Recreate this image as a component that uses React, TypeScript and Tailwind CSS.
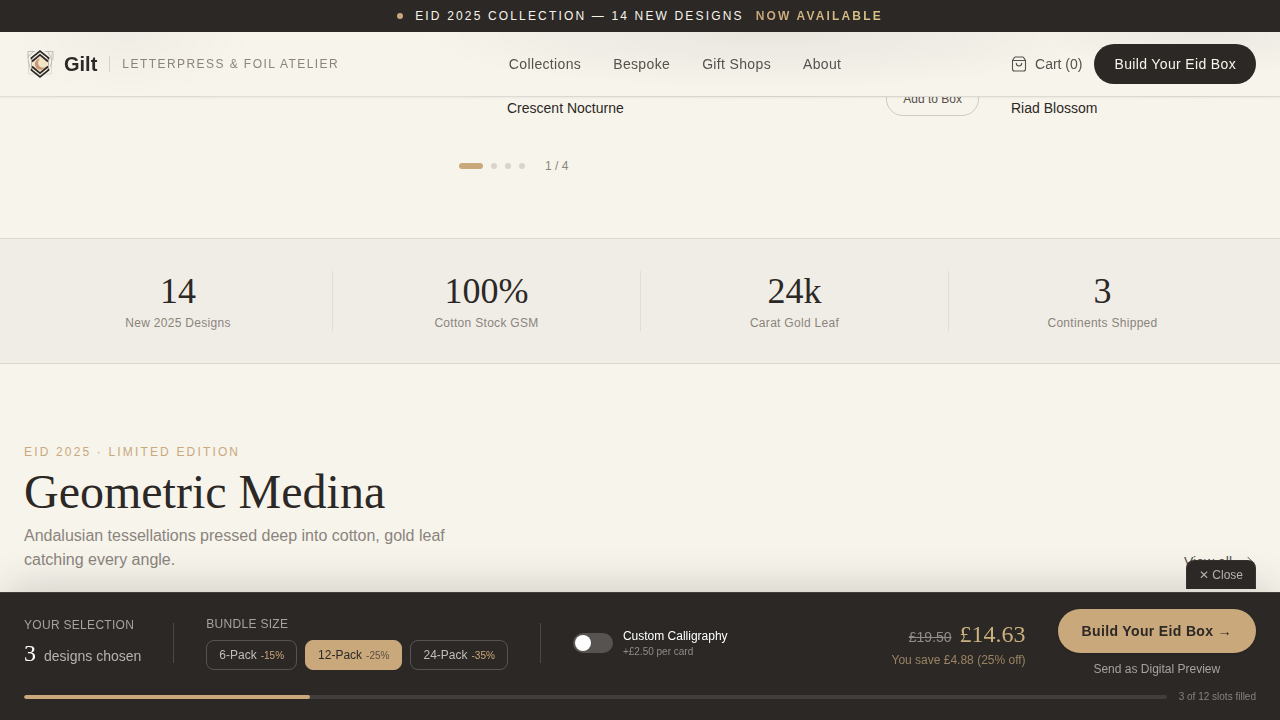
import { useState } from 'react';
import { ArrowRight } from 'lucide-react';

const navLinks = ['Collections', 'Bespoke', 'Gift Shops', 'About'];

const stats = [
  { value: '14', label: 'New 2025 Designs' },
  { value: '100%', label: 'Cotton Stock GSM' },
  { value: '24k', label: 'Carat Gold Leaf' },
  { value: '3', label: 'Continents Shipped' },
];

const bundles = [
  { size: 6, discount: 15 },
  { size: 12, discount: 25 },
  { size: 24, discount: 35 },
];

const Logo = () => (
  <svg viewBox="0 0 32 32" className="w-8 h-8" fill="none" aria-hidden="true">
    <path d="M4.500 5v21h23V5" stroke="#dddad4" />
    <path d="M4 11V3.500h7M21 3.500h8v8M4 9l5-5M28 12l-4-8M4 12l2 8M28 12l-1.500 7" stroke="#bfbcb6" />
    <path d="M16 2.500 25 10v12l-9 7.500L7 22V10z" fill="#efe9de" />
    <path d="M16 7.500 23 13v6.500l-7 6L9 19.500V13z" fill="#f4e4c6" />
    <path d="M7.500 11.500V9.800L16 3l8.500 6.800v1.700M7.500 20.500v1.700L16 29l8.500-6.800v-1.700" stroke="#2c2825" strokeWidth="1.700" />
    <path d="M8 13.500 16 6.800l8 6.700M8 18.500l8 6.700 8-6.700" stroke="#2c2825" strokeWidth="1.700" />
    <path d="M7.500 11v10M24.500 11v10" stroke="#a39e96" strokeWidth=".8" />
    <path d="M16.500 10.500a5.600 5.600 0 1 0 4.800 8.500 4.600 4.600 0 0 1-4.800-8.500z" fill="#c9987a" />
  </svg>
);

const BagIcon = () => (
  <svg viewBox="0 0 16 16" className="w-4 h-4" fill="none" stroke="currentColor" strokeWidth="1.100" strokeLinecap="round" strokeLinejoin="round" aria-hidden="true">
    <path d="M1.500 4.500 3.200 1.700Q3.700 1 4.500 1h7q.8 0 1.300.7l1.700 2.800v8.500a2 2 0 0 1-2 2h-9a2 2 0 0 1-2-2z" />
    <path d="M1.500 4.500h13M5.300 7.300a2.700 2.700 0 0 0 5.400 0" />
  </svg>
);

export default function App() {
  const [bundle, setBundle] = useState(12);
  const [calligraphy, setCalligraphy] = useState(false);
  const [open, setOpen] = useState(true);

  const chosen = 3;

  return (
    <div className="min-h-screen bg-[#f7f4ec] text-[#2c2825] font-['Liberation_Sans',Arial,sans-serif]">
      {/* Announcement + navigation */}
      <div className="fixed top-0 inset-x-0 z-40">
        <div className="h-8 bg-[#2c2825] text-[#f7f4ec] text-xs tracking-[0.18em] flex items-center justify-center gap-3">
          <span className="w-1.5 h-1.5 rounded-full bg-[#c9a882]" />
          <span>EID 2025 COLLECTION — 14 NEW DESIGNS</span>
          <span className="font-bold bg-gradient-to-r from-[#c9a87c] to-[#dcc589] bg-clip-text text-transparent">
            NOW AVAILABLE
          </span>
        </div>

        <header className="bg-[#f7f4ec] bg-[radial-gradient(ellipse_28%_90%_at_60%_0%,rgba(44,40,37,0.07),transparent),radial-gradient(ellipse_12%_70%_at_94%_0%,rgba(44,40,37,0.06),transparent),radial-gradient(ellipse_10%_100%_at_10%_0%,rgba(44,40,37,0.03),transparent)] border-b border-[#2c2825]/10 shadow-xs">
          <div className="h-16 px-6 flex items-center justify-between">
            <div className="flex items-center gap-3">
              <a href="#" className="flex items-center gap-2 text-xl font-bold">
                <Logo />
                Gilt
              </a>
              <span className="w-px h-4 bg-[#2c2825]/15" />
              <span className="text-xs tracking-[0.12em] text-[#8a847c]">LETTERPRESS &amp; FOIL ATELIER</span>
            </div>

            <nav className="flex items-center gap-8 text-sm tracking-wide text-[#56514c]">
              {navLinks.map((link) => (
                <a key={link} href="#" className="hover:text-[#2c2825] transition-colors">{link}</a>
              ))}
            </nav>

            <div className="flex items-center gap-3">
              <button className="flex items-center gap-2 text-sm text-[#56514c]">
                <BagIcon />
                Cart (0)
              </button>
              <button className="h-10 px-5 rounded-full bg-[#2c2825] text-[#f7f4ec] text-sm tracking-wide">
                Build Your Eid Box
              </button>
            </div>
          </div>
        </header>
      </div>

      <main className="pb-32">
        {/* Carousel */}
        <section className="overflow-hidden pt-20 pb-16">
          <div className="flex gap-6 pl-[503px]">
            <article className="w-[480px] h-[38px] shrink-0 px-1 flex items-center justify-between">
              <h3 className="self-end text-sm">Crescent Nocturne</h3>
              <button className="px-4 py-2 rounded-full border border-[#2c2825]/20 text-xs text-[#56514c]">Add to Box</button>
            </article>
            <article className="w-[480px] h-[38px] shrink-0 px-1 flex items-center justify-between">
              <h3 className="self-end text-sm">Riad Blossom</h3>
            </article>
          </div>

          <div className="mt-10 pl-[459px] flex items-center gap-5">
            <div className="flex items-center gap-2">
              <button aria-label="Slide 1" className="w-6 h-1.5 rounded-full bg-[#c9a87c]" />
              <button aria-label="Slide 2" className="w-1.5 h-1.5 rounded-full bg-[#2c2825]/15" />
              <button aria-label="Slide 3" className="w-1.5 h-1.5 rounded-full bg-[#2c2825]/15" />
              <button aria-label="Slide 4" className="w-1.5 h-1.5 rounded-full bg-[#2c2825]/15" />
            </div>
            <span className="text-xs text-[#8a847c]">1 / 4</span>
          </div>
        </section>

        {/* Stats */}
        <section className="px-6 py-8 bg-[#f0ede6] border-y border-[#2c2825]/10">
          <div className="grid grid-cols-4">
            {stats.map((stat) => (
              <div key={stat.label} className="text-center border-l border-[#2c2825]/8 first:border-l-0">
                <p className="text-4xl font-['Liberation_Serif',serif]">{stat.value}</p>
                <p className="mt-1 text-xs tracking-wide text-[#8a847c]">{stat.label}</p>
              </div>
            ))}
          </div>
        </section>

        {/* Collection intro */}
        <section className="px-6 pt-20 pb-12 flex items-end justify-between">
          <div>
            <p className="text-xs tracking-[0.18em] text-[#c9a87c]">EID 2025 · LIMITED EDITION</p>
            <h2 className="mt-2 text-5xl font-['Liberation_Serif',serif]">Geometric Medina</h2>
            <p className="mt-2 max-w-md text-base text-[#8a847c]">
              Andalusian tessellations pressed deep into cotton, gold leaf catching every angle.
            </p>
          </div>
          <a href="#" className="flex items-center gap-2 text-sm text-[#56514c]">
            View all
            <ArrowRight className="w-4 h-4" strokeWidth={1.5} />
          </a>
        </section>
      </main>

      {/* Bundle builder */}
      {open && (
        <aside className="fixed bottom-0 inset-x-0 z-50 bg-[#2c2825] border-t border-white/10 shadow-[0_-12px_40px_-8px_rgba(44,40,37,0.2)]">
          <button
            onClick={() => setOpen(false)}
            className="absolute bottom-full right-6 mb-1 px-3 py-1.5 rounded-t-lg border border-b-0 border-white/5 bg-[#2c2825] text-xs text-[#b5b2af]"
          >
            ✕ Close
          </button>

          <div className="px-6 py-4">
            <div className="flex items-center gap-8">
              <div>
                <p className="text-xs tracking-wide text-[#a5a29f]">YOUR SELECTION</p>
                <p className="mt-1 flex items-baseline gap-2 text-sm text-[#b5b2af]">
                  <span className="text-2xl text-white font-['Liberation_Serif',serif]">{chosen}</span>
                  designs chosen
                </p>
              </div>

              <span className="w-px h-10 bg-white/15" />

              <div>
                <p className="text-xs tracking-wide text-[#a5a29f]">BUNDLE SIZE</p>
                <div className="mt-2 flex gap-2">
                  {bundles.map(({ size, discount }) => (
                    <button
                      key={size}
                      onClick={() => setBundle(size)}
                      className={
                        bundle === size
                          ? 'px-3 py-1.5 rounded-lg border text-xs border-[#c9a87c] bg-[#c9a87c] text-[#2c2825]'
                          : 'px-3 py-1.5 rounded-lg border text-xs border-white/20 text-[#c0bebc]'
                      }
                    >
                      {size}-Pack
                      <span className={bundle === size ? 'ml-1 text-[10px] text-[#2c2825]/70' : 'ml-1 text-[10px] text-[#c9a87c]'}>
                        -{discount}%
                      </span>
                    </button>
                  ))}
                </div>
              </div>

              <span className="w-px h-10 bg-white/15" />

              <label className="flex items-center gap-2.5 cursor-pointer">
                <input
                  type="checkbox"
                  checked={calligraphy}
                  onChange={(e) => setCalligraphy(e.target.checked)}
                  className="sr-only peer"
                />
                <span className="relative w-10 h-5 rounded-full bg-white/20 peer-checked:bg-[#c9a87c] after:content-[''] after:absolute after:top-0.5 after:left-0.5 after:w-4 after:h-4 after:rounded-full after:bg-white after:transition-all peer-checked:after:translate-x-5" />
                <span className="flex flex-col">
                  <span className="text-xs text-white">Custom Calligraphy</span>
                  <span className="text-[10px] text-[#8f8c89]">+£2.50 per card</span>
                </span>
              </label>

              <div className="ml-auto text-right">
                <p className="flex items-baseline justify-end gap-2">
                  <span className="text-sm line-through text-[#8f8c89]">£19.50</span>
                  <span className="text-2xl text-[#c9b07c] font-['Liberation_Serif',serif]">£14.63</span>
                </p>
                <p className="mt-0.5 text-xs text-[#998363]">You save £4.88 (25% off)</p>
              </div>

              <div className="flex flex-col items-center gap-2">
                <button className="h-11 px-6 rounded-full bg-[#c9a87c] text-[#2c2825] text-sm font-bold tracking-wide shadow-sm">
                  Build Your Eid Box →
                </button>
                <button className="text-xs text-[#a5a29f]">Send as Digital Preview</button>
              </div>
            </div>

            <div className="mt-3 flex items-center gap-3">
              <div className="flex-1 h-1 rounded-full bg-white/10 overflow-hidden">
                <div className="h-full rounded-full bg-[#c9a87c]" style={{ width: `${(chosen / bundle) * 100}%` }} />
              </div>
              <span className="text-[10px] text-[#85827f]">{chosen} of {bundle} slots filled</span>
            </div>
          </div>
        </aside>
      )}
    </div>
  );
}
